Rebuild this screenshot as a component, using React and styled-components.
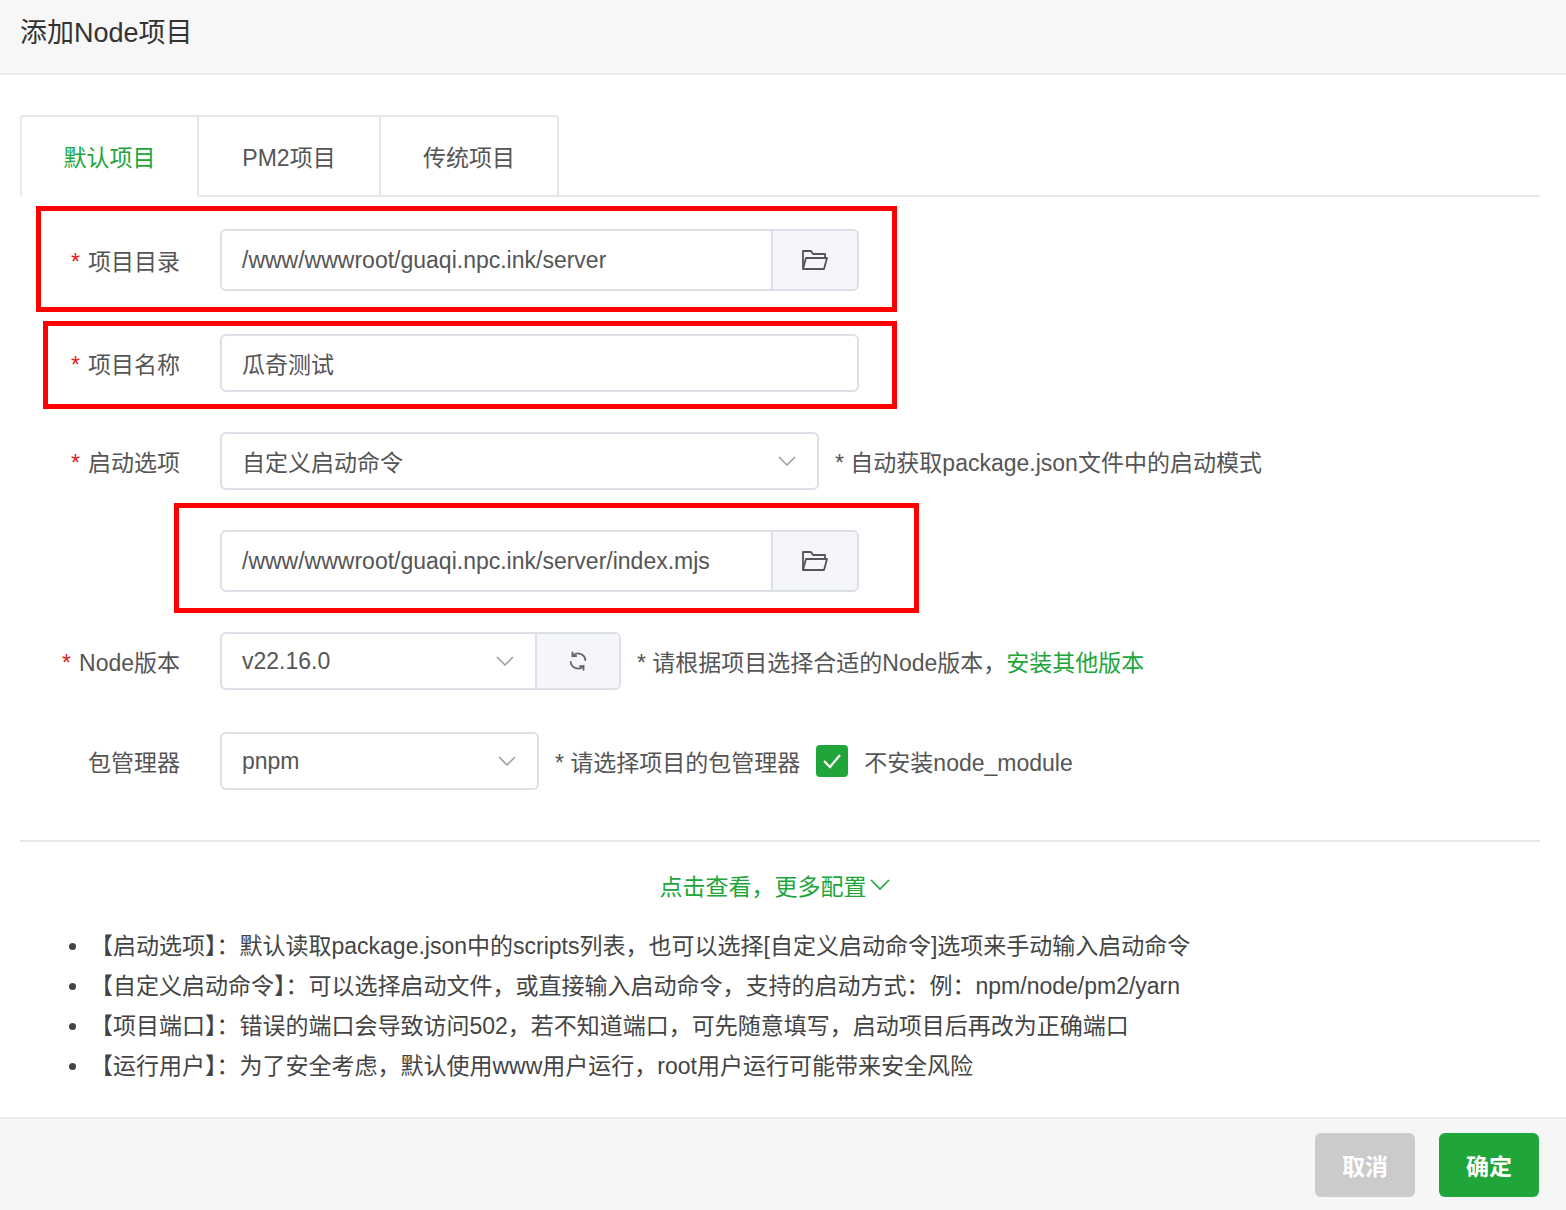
import React from "react";
import styled, { createGlobalStyle } from "styled-components";

const Global = createGlobalStyle`
  html,body{margin:0;padding:0;background:#fff;}
  body{font-family:"Liberation Sans","Noto Sans CJK SC",sans-serif;color:#333;}
`;
const Page = styled.div`position:relative;width:1566px;height:1210px;display:flex;flex-direction:column;overflow:hidden;`;
const Header = styled.div`height:75px;box-sizing:border-box;background:#f7f7f7;border-bottom:2px solid #ececec;padding:0 20px;display:flex;align-items:center;font-size:27px;color:#333;padding-bottom:12px;`;
const Body = styled.div`flex:1;padding:40px 26px 0 20px;`;
const Tabs = styled.div`display:flex;border-bottom:2px solid #e4e7ec;height:80px;`;
const Tab = styled.div`width:${p=>p.w}px;box-sizing:border-box;display:flex;align-items:center;justify-content:center;font-size:23px;color:${p=>p.active?"#20a53a":"#555"};border:2px solid #e4e7ec;border-left:${p=>p.first?"2px solid #e4e7ec":"none"};border-bottom:${p=>p.active?"2px solid #fff":"none"};border-radius:${p=>p.first?"4px 0 0 0":p.last?"0 4px 0 0":"0"};margin-bottom:${p=>p.active?"-2px":"0"};background:#fff;`;
const Form = styled.div`display:flex;flex-direction:column;padding-top:32px;`;
const Row = styled.div`display:flex;align-items:center;height:${p=>p.h}px;margin-bottom:${p=>p.mb||0}px;`;
const Label = styled.div`width:160px;text-align:right;font-size:23px;color:#555;padding-right:40px;box-sizing:content-box;width:160px;margin-right:0;`;
const Star = styled.span`color:#e02020;margin-right:8px;`;
const Group = styled.div`display:flex;height:${p=>p.h||58}px;width:${p=>p.w}px;border:2px solid #dcdfe6;border-radius:6px;box-sizing:border-box;overflow:hidden;`;
const Text = styled.div`flex:1;display:flex;align-items:center;padding:0 20px;font-size:23px;color:#555;white-space:nowrap;overflow:hidden;justify-content:space-between;`;
const Addon = styled.div`width:${p=>p.w||84}px;background:#f5f6f9;border-left:2px solid #dcdfe6;display:flex;align-items:center;justify-content:center;color:#666;`;
const Note = styled.div`font-size:23px;color:#555;margin-left:${p=>p.ml||16}px;white-space:nowrap;display:flex;align-items:center;`;
const Green = styled.span`color:#20a53a;`;
const Check = styled.div`width:32px;height:32px;border-radius:4px;background:#20a53a;display:flex;align-items:center;justify-content:center;margin:0 16px;`;
const Divider = styled.div`height:2px;background:#e4e7ec;margin-top:50px;`;
const More = styled.div`text-align:center;color:#20a53a;font-size:23px;margin-top:26px;padding-right:10px;display:flex;justify-content:center;align-items:center;gap:2px;`;
const List = styled.ul`margin:24px 0 0;padding-left:70px;font-size:23px;color:#444;li{height:40px;line-height:40px;}`;
const Footer = styled.div`height:93px;background:#f5f6f6;border-top:2px solid #ececec;display:flex;justify-content:flex-end;align-items:center;gap:24px;padding-right:27px;box-sizing:border-box;`;
const Btn = styled.div`width:100px;height:64px;border-radius:6px;background:${p=>p.primary?"#20a53a":"#cbcbcb"};color:#fff;font-size:23px;font-weight:bold;display:flex;align-items:center;justify-content:center;`;
const RedBox = styled.div`position:absolute;border:5px solid #f00;box-sizing:border-box;`;

const Folder = () => (
  <svg width="28" height="24" viewBox="0 0 28 24" fill="none" stroke="#555" strokeWidth="1.8" strokeLinejoin="round">
    <path d="M2 21V3h8l2 3h12v4"/><path d="M2 21l3-11h21l-3 11z"/>
  </svg>
);
const Chev = () => (
  <svg width="20" height="12" viewBox="0 0 20 12" fill="none" stroke="#999" strokeWidth="1.5"><path d="M2 2l8 8 8-8"/></svg>
);
const Refresh = () => (
  <svg width="22" height="22" viewBox="0 0 24 24" fill="none" stroke="#666" strokeWidth="2" strokeLinecap="round">
    <path d="M20 11A8 8 0 0 0 6 6.5"/><path d="M6 2.5v4h4"/><path d="M4 13a8 8 0 0 0 14 4.5"/><path d="M18 21.5v-4h-4"/>
  </svg>
);

export default function App(){
  return (<Page><Global/>
    <Header>添加Node项目</Header>
    <Body>
      <Tabs>
        <Tab w={179} first active>默认项目</Tab>
        <Tab w={182}>PM2项目</Tab>
        <Tab w={178} last>传统项目</Tab>
      </Tabs>
      <Form>
        <Row h={62} mb={43}><Label><Star>*</Star>项目目录</Label>
          <Group w={639} h={62}><Text>/www/wwwroot/guaqi.npc.ink/server</Text><Addon><Folder/></Addon></Group></Row>
        <Row h={58} mb={40}><Label><Star>*</Star>项目名称</Label>
          <Group w={639}><Text>瓜奇测试</Text></Group></Row>
        <Row h={58} mb={40}><Label><Star>*</Star>启动选项</Label>
          <Group w={599}><Text>自定义启动命令<Chev/></Text></Group>
          <Note>* 自动获取package.json文件中的启动模式</Note></Row>
        <Row h={62} mb={40}><Label></Label>
          <Group w={639} h={62}><Text>/www/wwwroot/guaqi.npc.ink/server/index.mjs</Text><Addon><Folder/></Addon></Group></Row>
        <Row h={58} mb={42}><Label><Star>*</Star>Node版本</Label>
          <Group w={401}><Text>v22.16.0<Chev/></Text><Addon w={82}><Refresh/></Addon></Group>
          <Note>* 请根据项目选择合适的Node版本，<Green>安装其他版本</Green></Note></Row>
        <Row h={58}><Label>包管理器</Label>
          <Group w={319}><Text>pnpm<Chev/></Text></Group>
          <Note>* 请选择项目的包管理器<Check><svg width="20" height="16" viewBox="0 0 20 16" fill="none" stroke="#fff" strokeWidth="2.2"><path d="M2 8l6 6L18 2"/></svg></Check>不安装node_module</Note></Row>
      </Form>
      <Divider/>
      <More>点击查看，更多配置<svg width="22" height="14" viewBox="0 0 22 14" fill="none" stroke="#20a53a" strokeWidth="1.6"><path d="M2 2l9 9 9-9"/></svg></More>
      <List>
        <li>【启动选项】：默认读取package.json中的scripts列表，也可以选择[自定义启动命令]选项来手动输入启动命令</li>
        <li>【自定义启动命令】：可以选择启动文件，或直接输入启动命令，支持的启动方式：例：npm/node/pm2/yarn</li>
        <li>【项目端口】：错误的端口会导致访问502，若不知道端口，可先随意填写，启动项目后再改为正确端口</li>
        <li>【运行用户】：为了安全考虑，默认使用www用户运行，root用户运行可能带来安全风险</li>
      </List>
    </Body>
    <Footer><Btn>取消</Btn><Btn primary>确定</Btn></Footer>
    <RedBox style={{left:36,top:206,width:861,height:106}}/>
    <RedBox style={{left:43,top:321,width:854,height:88}}/>
    <RedBox style={{left:174,top:503,width:745,height:110}}/>
  </Page>);
}
